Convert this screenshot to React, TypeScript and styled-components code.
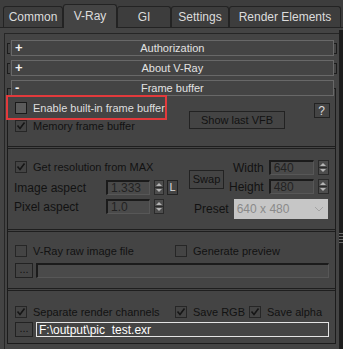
import React from "react";
import styled, { createGlobalStyle } from "styled-components";

const GlobalStyle = createGlobalStyle`
  html, body {
    margin: 0;
    padding: 0;
    background: #444444;
  }
  body {
    font-family: "Liberation Sans", Arial, sans-serif;
    font-size: 11px;
  }
  * { box-sizing: border-box; }
`;

const DIM = "#121212";

const Window = styled.div`
  width: 343px;
  height: 349px;
  background: #444444;
  overflow: hidden;
  display: flex;
  flex-direction: column;
`;

const TabBar = styled.div`
  height: 28px;
  display: flex;
  align-items: flex-end;
  padding-left: 3px;
  background: #3d3d3d;
  border-bottom: 1px solid #232323;
`;

const Tab = styled.div<{ $w: number; $active?: boolean }>`
  width: ${(p) => p.$w}px;
  height: ${(p) => (p.$active ? 24 : 21)}px;
  margin-bottom: ${(p) => (p.$active ? -1 : 0)}px;
  background: ${(p) => (p.$active ? "#444444" : "#3d3d3d")};
  border: 1px solid #232323;
  border-bottom: none;
  border-radius: 3px 3px 0 0;
  color: #dcdcdc;
  font-size: 12px;
  display: flex;
  align-items: center;
  justify-content: center;
  padding-bottom: ${(p) => (p.$active ? 2 : 0)}px;
`;

const Body = styled.div`
  flex: 1;
  display: flex;
`;

const Main = styled.div`
  flex: 1;
  margin: 5px 0 0 4px;
  border-top: 1px solid #262626;
  border-left: 1px solid #262626;
  padding-top: 6px;
  display: flex;
  flex-direction: column;
`;

const Scrollbar = styled.div`
  width: 6px;
  margin-top: 2px;
  background: #1d1d1d;
  display: flex;
  flex-direction: column;
  align-items: center;
`;

const Grip = styled.div`
  margin-top: 203px;
  width: 4px;
  height: 12px;
  background: repeating-linear-gradient(
    to bottom,
    #6a6a6a 0 1px,
    transparent 1px 3px
  );
`;

const RolloutRow = styled.div`
  height: 16px;
  margin: 0 2px 4px 2px;
  display: flex;
  align-items: center;
`;

const Bracket = styled.div<{ $side: "left" | "right" }>`
  width: 3px;
  height: 11px;
  border: 1px solid #1c1c1c;
  ${(p) => (p.$side === "left" ? "border-right: none; margin-right: 1px;" : "border-left: none;")}
`;

const RolloutHeader = styled.div`
  flex: 1;
  height: 16px;
  border: 1px solid #686868;
  background: #444444;
  color: #e2e2e2;
  display: grid;
  grid-template-columns: 14px 1fr 14px;
  align-items: center;
  line-height: 14px;
`;

const Sign = styled.span`
  color: #f2f2f2;
  font-weight: bold;
  font-size: 13px;
  padding-left: 3px;
`;

const Title = styled.span`
  text-align: center;
`;

const Frame = styled.div`
  margin: 8px 3px 0 2px;
  border: 1px solid #1c1c1c;
  display: flex;
  flex-direction: column;
`;

const FrameHeader = styled(RolloutHeader)`
  flex: none;
  margin: -9px 1px 0 3px;
`;

const Group = styled.div<{ $h: number; $last?: boolean }>`
  height: ${(p) => p.$h}px;
  border-bottom: ${(p) => (p.$last ? "none" : "3px double #1e1e1e")};
  display: flex;
`;

const Column = styled.div<{ $w?: number; $pt?: number }>`
  ${(p) => (p.$w ? `width: ${p.$w}px;` : "flex: 1;")}
  padding-top: ${(p) => p.$pt ?? 0}px;
  display: flex;
  flex-direction: column;
`;

const Highlight = styled.div`
  width: 161px;
  height: 25px;
  margin: -1px 0 0 -2px;
  border: 2px solid #e23a3c;
  padding-left: 7px;
  display: flex;
  align-items: center;
`;

const CheckRow = styled.div<{ $mb?: number }>`
  height: 12px;
  padding-left: 7px;
  margin-bottom: ${(p) => p.$mb ?? 0}px;
  display: flex;
  align-items: center;
`;

const CheckItem = styled.div<{ $w?: number }>`
  ${(p) => (p.$w ? `width: ${p.$w}px;` : "")}
  display: flex;
  align-items: center;
  gap: 6px;
`;

const Box = styled.span<{ $enabled?: boolean }>`
  width: 12px;
  height: 12px;
  flex: none;
  border: 1px solid ${(p) => (p.$enabled ? "#1a1a1a" : "#262626")};
  background: ${(p) => (p.$enabled ? "#5b5b5b" : "#444444")};
  display: flex;
  align-items: center;
  justify-content: center;
`;

const Label = styled.span<{ $enabled?: boolean }>`
  color: ${(p) => (p.$enabled ? "#dedede" : DIM)};
  white-space: nowrap;
  line-height: 12px;
`;

const Button = styled.div<{ $w: number; $h: number; $mt?: number; $ml?: number; $light?: boolean }>`
  width: ${(p) => p.$w}px;
  height: ${(p) => p.$h}px;
  margin-top: ${(p) => p.$mt ?? 0}px;
  margin-left: ${(p) => p.$ml ?? 0}px;
  flex: none;
  border: 1px solid #222222;
  background: #444444;
  color: ${(p) => (p.$light ? "#dcdcdc" : DIM)};
  font-size: 11px;
  display: flex;
  align-items: center;
  justify-content: center;
  line-height: 1;
`;

const HelpButton = styled(Button)`
  margin-left: auto;
  margin-right: 5px;
  font-size: 12px;
`;

const FieldRow = styled.div<{ $mt?: number }>`
  height: 15px;
  margin-top: ${(p) => p.$mt ?? 0}px;
  padding-left: 6px;
  display: flex;
  align-items: center;
`;

const FieldLabel = styled.span`
  width: 92px;
  color: ${DIM};
  font-size: 12px;
`;

const Input = styled.div<{ $w?: number; $h?: number }>`
  ${(p) => (p.$w ? `width: ${p.$w}px;` : "flex: 1;")}
  height: ${(p) => p.$h ?? 15}px;
  background: #4a4a4a;
  border-top: 2px solid #1b1b1b;
  border-left: 2px solid #1b1b1b;
  border-right: 1px solid #575757;
  border-bottom: 1px solid #575757;
  color: #222222;
  padding-left: 3px;
  display: flex;
  align-items: center;
  font-size: 12px;
  white-space: nowrap;
`;

const PathInput = styled.div`
  flex: 1;
  height: 15px;
  border: 1px solid #e4e4e4;
  color: #ffffff;
  padding-left: 2px;
  display: flex;
  align-items: center;
  font-size: 12px;
`;

const SpinBox = styled.div<{ $w?: number }>`
  width: ${(p) => p.$w ?? 10}px;
  height: 15px;
  margin-left: 4px;
  flex: none;
  border: 1px solid #2a2a2a;
  background: #4d4d4d;
  display: flex;
  align-items: center;
  justify-content: center;
`;

const TopRight = styled.div`
  height: 34px;
  display: flex;
`;

const WHColumn = styled.div`
  margin-left: auto;
  padding-right: 6px;
  display: flex;
  flex-direction: column;
  gap: 4px;
`;

const WHRow = styled.div`
  height: 15px;
  display: flex;
  align-items: center;
  justify-content: flex-end;
`;

const SideLabel = styled.span`
  color: ${DIM};
  margin-right: 5px;
  font-size: 12px;
`;

const PresetRow = styled.div`
  margin-top: 5px;
  padding-left: 14px;
  display: flex;
  align-items: center;
  height: 20px;
`;

const Dropdown = styled.div`
  width: 94px;
  height: 20px;
  margin-left: auto;
  margin-right: 7px;
  background: #c6c6c6;
  color: #8a8a8a;
  font-size: 12px;
  padding: 0 4px 0 3px;
  display: flex;
  align-items: center;
  justify-content: space-between;
`;

const FileRow = styled.div<{ $mt: number }>`
  height: 15px;
  margin-top: ${(p) => p.$mt}px;
  padding: 0 6px 0 7px;
  display: flex;
  align-items: center;
  gap: 3px;
`;

const Dots = styled(Button)`
  align-items: flex-end;
  padding-bottom: 2px;
`;

const Check = () => (
  <svg width="10" height="10" viewBox="0 0 10 10">
    <path d="M1.5 4.5 L4 7.5 L8.5 1.5" fill="none" stroke="#161616" strokeWidth="1.6" />
  </svg>
);

const Spinner = () => (
  <svg width="8" height="13" viewBox="0 0 8 13">
    <path d="M1 5 L4 2 L7 5 Z" fill="#b4b4b4" />
    <path d="M0 6.5 H8" stroke="#2a2a2a" strokeWidth="1" />
    <path d="M1 8 L4 11 L7 8 Z" fill="#b4b4b4" />
  </svg>
);

const Chevron = () => (
  <svg width="10" height="6" viewBox="0 0 10 6">
    <path d="M1 1 L5 5 L9 1" fill="none" stroke="#a4a4a4" strokeWidth="1" />
  </svg>
);

const CheckBox = ({
  label,
  checked,
  enabled,
  w,
}: {
  label: string;
  checked?: boolean;
  enabled?: boolean;
  w?: number;
}) => (
  <CheckItem $w={w}>
    <Box $enabled={enabled}>{checked && <Check />}</Box>
    <Label $enabled={enabled}>{label}</Label>
  </CheckItem>
);

const tabs = [
  { name: "Common", w: 60 },
  { name: "V-Ray", w: 54, active: true },
  { name: "GI", w: 54 },
  { name: "Settings", w: 58 },
  { name: "Render Elements", w: 112 },
];

const Rollout = ({ title }: { title: string }) => (
  <RolloutRow>
    <Bracket $side="left" />
    <RolloutHeader>
      <Sign>+</Sign>
      <Title>{title}</Title>
    </RolloutHeader>
    <Bracket $side="right" />
  </RolloutRow>
);

const App = () => {
  return (
    <Window>
      <GlobalStyle />
      <TabBar>
        {tabs.map((t) => (
          <Tab key={t.name} $w={t.w} $active={t.active}>
            {t.name}
          </Tab>
        ))}
      </TabBar>
      <Body>
        <Main>
          <Rollout title="Authorization" />
          <Rollout title="About V-Ray" />
          <Frame>
            <FrameHeader>
              <Sign>-</Sign>
              <Title>Frame buffer</Title>
            </FrameHeader>

            <Group $h={53}>
              <Column $w={159}>
                <Highlight>
                  <CheckBox label="Enable built-in frame buffer" enabled />
                </Highlight>
                <CheckRow>
                  <CheckBox label="Memory frame buffer" checked />
                </CheckRow>
              </Column>
              <Button $w={96} $h={18} $mt={15} $ml={22}>
                Show last VFB
              </Button>
              <HelpButton $w={16} $h={15} $mt={7} $light>
                ?
              </HelpButton>
            </Group>

            <Group $h={83}>
              <Column $w={172} $pt={12}>
                <CheckRow $mb={7}>
                  <CheckBox label="Get resolution from MAX" checked />
                </CheckRow>
                <FieldRow>
                  <FieldLabel>Image aspect</FieldLabel>
                  <Input $w={44}>1.333</Input>
                  <SpinBox>
                    <Spinner />
                  </SpinBox>
                  <Button $w={11} $h={15} $ml={3} $light>
                    L
                  </Button>
                </FieldRow>
                <FieldRow $mt={4}>
                  <FieldLabel>Pixel aspect</FieldLabel>
                  <Input $w={44}>1.0</Input>
                  <SpinBox>
                    <Spinner />
                  </SpinBox>
                </FieldRow>
              </Column>
              <Column $pt={11}>
                <TopRight>
                  <Button $w={35} $h={19} $mt={10} $ml={9}>
                    Swap
                  </Button>
                  <WHColumn>
                    <WHRow>
                      <SideLabel>Width</SideLabel>
                      <Input $w={45}>640</Input>
                      <SpinBox $w={11}>
                        <Spinner />
                      </SpinBox>
                    </WHRow>
                    <WHRow>
                      <SideLabel>Height</SideLabel>
                      <Input $w={45}>480</Input>
                      <SpinBox $w={11}>
                        <Spinner />
                      </SpinBox>
                    </WHRow>
                  </WHColumn>
                </TopRight>
                <PresetRow>
                  <SideLabel>Preset</SideLabel>
                  <Dropdown>
                    <span>640 x 480</span>
                    <Chevron />
                  </Dropdown>
                </PresetRow>
              </Column>
            </Group>

            <Group $h={59}>
              <Column $pt={13}>
                <CheckRow>
                  <CheckBox label="V-Ray raw image file" w={160} />
                  <CheckBox label="Generate preview" />
                </CheckRow>
                <FileRow $mt={6}>
                  <Dots $w={18} $h={15}>...</Dots>
                  <Input />
                </FileRow>
              </Column>
            </Group>

            <Group $h={52} $last>
              <Column $pt={15}>
                <CheckRow>
                  <CheckBox label="Separate render channels" checked w={160} />
                  <CheckBox label="Save RGB" checked w={74} />
                  <CheckBox label="Save alpha" checked />
                </CheckRow>
                <FileRow $mt={4}>
                  <Dots $w={18} $h={15}>...</Dots>
                  <PathInput>F:\output\pic_test.exr</PathInput>
                </FileRow>
              </Column>
            </Group>
          </Frame>
        </Main>
        <Scrollbar>
          <Grip />
        </Scrollbar>
      </Body>
    </Window>
  );
};

export default App;
